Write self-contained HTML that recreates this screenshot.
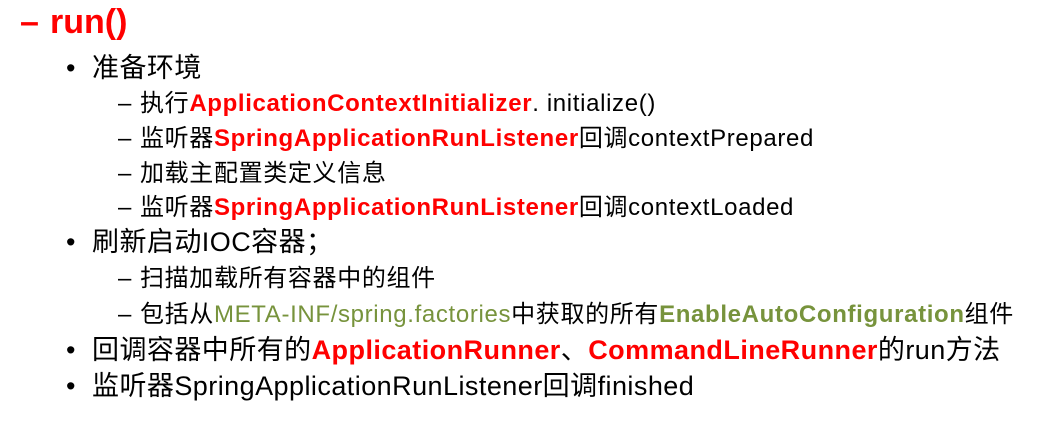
<!DOCTYPE html>
<html><head><meta charset="utf-8"><style>
body{margin:0;width:1040px;height:426px;background:#fff;overflow:hidden;font-family:"Liberation Sans","Noto Sans CJK SC",sans-serif;color:#000}
.l{position:absolute;white-space:nowrap;line-height:1}
.r{color:#f00;font-weight:bold}
.g{color:#77933c}
.gb{color:#77933c;font-weight:bold}
.t{left:20px;top:5px;font-size:34px;color:#f00;font-weight:bold}
.t span{position:absolute;left:30px}
.b{left:92px;font-size:27px;letter-spacing:0.45px}
.b:before{content:"•";position:absolute;left:-26px}
.s{left:140px;font-size:24px;letter-spacing:0.65px}
.s:before{content:"–";position:absolute;left:-22px}
</style></head><body>
<div class="l t">–<span>run()</span></div>
<div class="l b" style="top:55px">准备环境</div>
<div class="l s" style="top:92px">执行<span class="r">ApplicationContextInitializer</span>. initialize()</div>
<div class="l s" style="top:127px">监听器<span class="r">SpringApplicationRunListener</span>回调contextPrepared</div>
<div class="l s" style="top:162px">加载主配置类定义信息</div>
<div class="l s" style="top:196px">监听器<span class="r">SpringApplicationRunListener</span>回调contextLoaded</div>
<div class="l b" style="top:229px">刷新启动IOC容器；</div>
<div class="l s" style="top:267px">扫描加载所有容器中的组件</div>
<div class="l s" style="top:303px">包括从<span class="g">META-INF/spring.factories</span>中获取的所有<span class="gb">EnableAutoConfiguration</span>组件</div>
<div class="l b" style="top:337px">回调容器中所有的<span class="r">ApplicationRunner</span>、<span class="r">CommandLineRunner</span>的run方法</div>
<div class="l b" style="top:373px">监听器SpringApplicationRunListener回调finished</div>
</body></html>
